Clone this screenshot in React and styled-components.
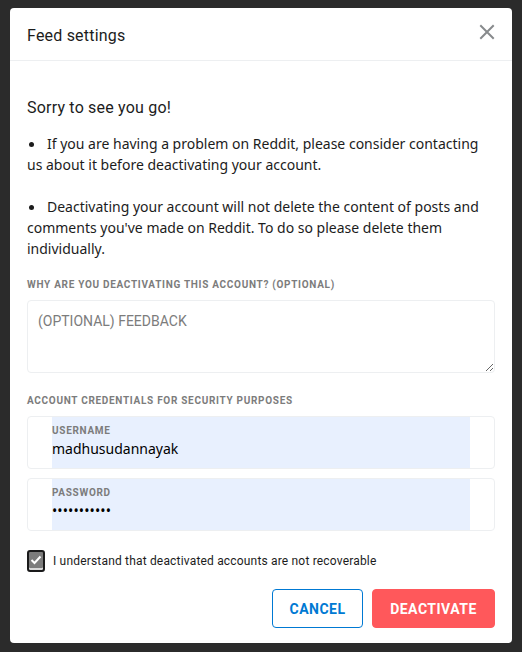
import styled, { createGlobalStyle } from "styled-components";

const Global = createGlobalStyle`
    html, body {
        margin: 0;
        padding: 0;
        background: #2b2b2b;
    }
    body {
        font-family: "Noto Sans", Arial, sans-serif;
    }
`

const plex = `Roboto, "Liberation Sans", Arial, sans-serif`

function CloseIcon() {
    return (
        <svg width="20" height="20" viewBox="0 0 20 20">
            <path d="M4 4 L16 16 M16 4 L4 16" stroke="#878a8c" strokeWidth="2" strokeLinecap="square" />
        </svg>
    )
}

function CheckIcon() {
    return (
        <svg width="12" height="10" viewBox="0 0 12 10">
            <path d="M1.5 5 L4.5 8 L10.5 1.5" stroke="#ffffff" strokeWidth="2" fill="none" />
        </svg>
    )
}

function Field({ label, value, type }) {
    return (
        <FieldBox>
            <FieldFill>
                <FieldLabel>{label}</FieldLabel>
                <FieldValue $dots={type === 'password'}>{value}</FieldValue>
            </FieldFill>
        </FieldBox>
    )
}

function App() {
    return (
        <>
            <Global />
            <Page>
                <Modal>
                    <Header>
                        <Title>Feed settings</Title>
                        <CloseButton aria-label="close"><CloseIcon /></CloseButton>
                    </Header>
                    <Body>
                        <Sorry>Sorry to see you go!</Sorry>
                        <Bullet>
                            If you are having a problem on Reddit, please consider contacting us about it before deactivating your account.
                        </Bullet>
                        <Bullet $gap>
                            Deactivating your account will not delete the content of posts and comments you've made on Reddit. To do so please delete them individually.
                        </Bullet>
                        <SectionLabel $top={20}>Why are you deactivating this account? (Optional)</SectionLabel>
                        <Feedback placeholder="(OPTIONAL) FEEDBACK" />
                        <SectionLabel $top={22}>Account credentials for security purposes</SectionLabel>
                        <Field label="Username" value="madhusudannayak" />
                        <Field label="Password" value="•••••••••••" type="password" />
                        <CheckRow>
                            <CheckBox><CheckIcon /></CheckBox>
                            <CheckText>I understand that deactivated accounts are not recoverable</CheckText>
                        </CheckRow>
                        <Actions>
                            <Button $variant="outline">Cancel</Button>
                            <Button $variant="danger">Deactivate</Button>
                        </Actions>
                    </Body>
                </Modal>
            </Page>
        </>
    )
}

export default App;


const Page = styled.div`
    min-height: 652px;
    padding: 8px 10px 8px 10px;
    box-sizing: border-box;
`

const Modal = styled.div`
    background: #ffffff;
    border-radius: 4px;
    width: 502px;
    overflow: hidden;
`

const Header = styled.div`
    height: 53px;
    box-sizing: border-box;
    border-bottom: 1px solid #edeff1;
    display: flex;
    align-items: center;
    justify-content: space-between;
    padding: 0 15px 0 17px;
`

const Title = styled.div`
    font-family: ${plex};
    font-size: 16px;
    font-weight: 400;
    letter-spacing: 0.2px;
    color: #1c1c1c;
    margin-top: 2px;
`

const CloseButton = styled.button`
    border: none;
    background: none;
    padding: 0;
    width: 20px;
    height: 20px;
    margin-bottom: 4px;
    cursor: pointer;
    display: flex;
`

const Body = styled.div`
    padding: 35px 17px 15px 17px;
    display: flex;
    flex-direction: column;
`

const Sorry = styled.div`
    font-family: ${plex};
    font-size: 16px;
    line-height: 24px;
    letter-spacing: 0.2px;
    color: #1c1c1c;
`

const Bullet = styled.p`
    margin: ${p => p.$gap ? '21px' : '13px'} 0 0 0;
    font-size: 14px;
    line-height: 21px;
    color: #1c1c1c;
    &::before {
        content: "";
        display: inline-block;
        width: 5px;
        height: 5px;
        border-radius: 50%;
        background: #1c1c1c;
        margin: 0 13px 2px 2px;
        vertical-align: middle;
    }
`

const SectionLabel = styled.div`
    margin-top: ${p => p.$top}px;
    font-family: ${plex};
    font-size: 10px;
    line-height: 12px;
    font-weight: 700;
    letter-spacing: 0.7px;
    text-transform: uppercase;
    color: #7c7c7c;
`

const Feedback = styled.textarea`
    margin-top: 9px;
    height: 73px;
    box-sizing: border-box;
    border: 1px solid #edeff1;
    border-radius: 4px;
    padding: 12px 10px;
    font-family: ${plex};
    font-size: 14px;
    color: #1c1c1c;
    resize: vertical;
    outline: none;
    &::placeholder {
        color: #7c7c7c;
    }
`

const FieldBox = styled.div`
    margin-top: 9px;
    height: 53px;
    box-sizing: border-box;
    border: 1px solid #edeff1;
    border-radius: 4px;
    padding: 0 24px;
    display: flex;
`

const FieldFill = styled.div`
    flex: 1;
    background: #e8f0fe;
    padding-top: 8px;
    display: flex;
    flex-direction: column;
`

const FieldLabel = styled.div`
    font-family: ${plex};
    font-size: 10px;
    line-height: 12px;
    font-weight: 700;
    letter-spacing: 0.7px;
    text-transform: uppercase;
    color: #7c7c7c;
`

const FieldValue = styled.div`
    margin-top: 2px;
    font-size: 14px;
    line-height: 20px;
    letter-spacing: ${p => p.$dots ? '0.1px' : '0'};
    color: #000000;
`

const CheckRow = styled.div`
    margin-top: 19px;
    display: flex;
    align-items: center;
    gap: 8px;
`

const CheckBox = styled.div`
    width: 18px;
    height: 22px;
    box-sizing: border-box;
    border: 2px solid #1a1a1b;
    border-radius: 3px;
    background: #7c7c7c;
    box-shadow: inset 0 -2px 0 #d8d8d8;
    display: flex;
    align-items: center;
    justify-content: center;
    padding-bottom: 3px;
`

const CheckText = styled.span`
    font-family: ${plex};
    font-size: 12px;
    letter-spacing: 0.18px;
    color: #1c1c1c;
`

const Actions = styled.div`
    margin-top: 17px;
    display: flex;
    justify-content: flex-end;
    gap: 9px;
`

const Button = styled.button`
    height: 39px;
    box-sizing: border-box;
    border-radius: 4px;
    font-family: ${plex};
    font-size: 14px;
    font-weight: 700;
    letter-spacing: 0.5px;
    text-transform: uppercase;
    cursor: pointer;
    padding: 0 16px;
    border: 1px solid ${p => p.$variant === 'danger' ? '#ff585b' : '#0079d3'};
    background: ${p => p.$variant === 'danger' ? '#ff585b' : '#ffffff'};
    color: ${p => p.$variant === 'danger' ? '#ffffff' : '#0079d3'};
    min-width: ${p => p.$variant === 'danger' ? '123px' : '91px'};
`
